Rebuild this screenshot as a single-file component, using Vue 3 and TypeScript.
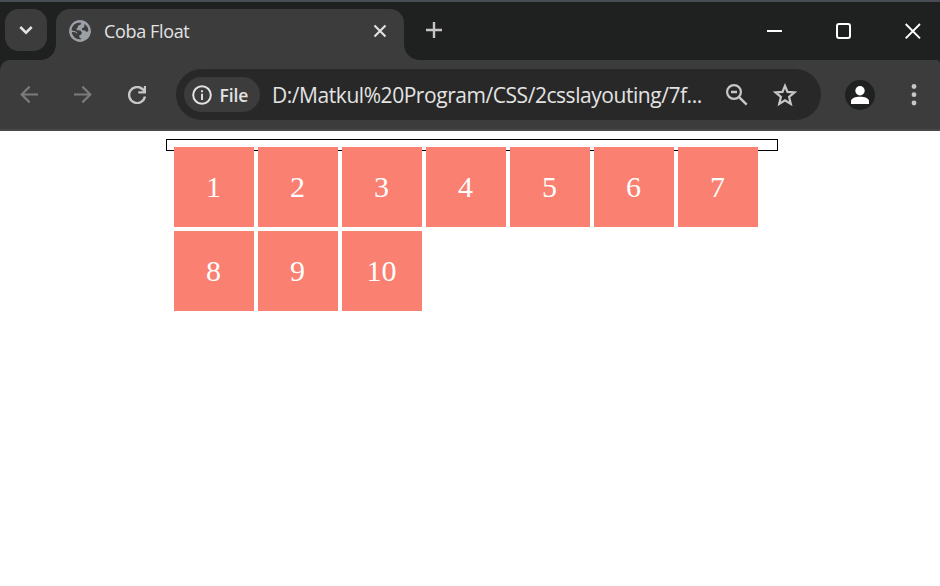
<script setup lang="ts">
const boxes: number[] = Array.from({ length: 10 }, (_, i) => i + 1)
</script>

<template>
  <div class="window">
    <header class="titlebar">
      <button class="tab-search" aria-label="Search tabs">
        <svg width="42" height="42" viewBox="0 0 42 42"><path d="M15.300 18 L21 23.700 L26.700 18" fill="none" stroke="#e3e3e3" stroke-width="2.500" /></svg>
      </button>
      <div class="tab">
        <svg class="globe" width="22" height="22" viewBox="0 0 22 22">
          <circle cx="11" cy="11" r="10.700" fill="#9aa0a6" />
          <path d="M2.500 10.500 C2.500 6 5.500 2.800 9.500 2.500 L12 2.600 L11.800 4.500 L9 5.700 L8.700 8 L7.300 8.500 L8 10.300 L11.300 10.600 L13 12.500 L12 14.800 L10.300 15.200 L10.300 17.200 L12.800 19.300 C7.500 20.300 3.200 16.500 2.600 12 L6.500 12.200 L8.200 14 L8 12 L5.500 10.900 Z" fill="#3c3c3c" />
          <path d="M15.500 4 C18.200 5.400 19.500 8 19.500 11 L17.600 11.900 L16 10.400 L13.300 10.200 L12.800 8.400 L15.200 7.200 Z" fill="#3c3c3c" />
          <circle cx="11" cy="11" r="9.700" fill="none" stroke="#9aa0a6" stroke-width="2" />
        </svg>
        <span class="title">Coba Float</span>
        <svg class="tab-close" width="14" height="14" viewBox="0 0 14 14"><path d="M1.500 1.500 L12.500 12.500 M12.500 1.500 L1.500 12.500" stroke="#e3e3e3" stroke-width="2.100" /></svg>
      </div>
      <svg class="new-tab" width="16" height="16" viewBox="0 0 16 16"><path d="M8 0 V16 M0 8 H16" stroke="#c7c5c8" stroke-width="2.400" /></svg>
      <div class="controls">
        <svg width="16" height="16" viewBox="0 0 16 16"><path d="M0 8 H15" stroke="#fff" stroke-width="2" /></svg>
        <svg width="16" height="16" viewBox="0 0 16 16"><rect x="1" y="1" width="13" height="14" rx="2" fill="none" stroke="#fff" stroke-width="2" /></svg>
        <svg width="16" height="16" viewBox="0 0 16 16"><path d="M0.700 1 L15 15.300 M15 1 L0.700 15.300" stroke="#fff" stroke-width="1.900" /></svg>
      </div>
    </header>
    <nav class="toolbar">
      <div class="nav-icons">
        <svg width="18" height="18" viewBox="0 0 18 18"><path d="M18 8.500 H1.500 M9.600 0.600 L1.700 8.500 L9.600 16.400" fill="none" stroke="#7b7b7b" stroke-width="2.200" /></svg>
        <svg width="18" height="18" viewBox="0 0 18 18"><path d="M0 8.500 H16.500 M8.400 0.600 L16.300 8.500 L8.400 16.400" fill="none" stroke="#7b7b7b" stroke-width="2.200" /></svg>
        <svg width="18" height="18" viewBox="0 0 18 18"><path d="M17 10.500 A8 8 0 1 1 14.700 3.300 L17 5.800 M17 0 V6.400 H10.300" fill="none" stroke="#c7c7c7" stroke-width="2.400" /></svg>
      </div>
      <div class="address">
        <div class="chip">
          <svg width="20" height="20" viewBox="0 0 20 20"><circle cx="10" cy="10" r="8.800" fill="none" stroke="#e3e3e3" stroke-width="2" /><path d="M10 8.700 V15 M10 5.300 V7.200" stroke="#e3e3e3" stroke-width="1.900" /></svg>
          <span>File</span>
        </div>
        <span class="url">D:/Matkul%20Program/CSS/2csslayouting/7f...</span>
        <svg class="zoom" width="22" height="22" viewBox="0 0 22 22"><circle cx="8" cy="8" r="6.900" fill="none" stroke="#c7c7c7" stroke-width="2.200" /><path d="M5 8 H11 M12.800 12.800 L20.700 20.700" fill="none" stroke="#c7c7c7" stroke-width="2.400" /></svg>
        <svg class="star" width="24" height="24" viewBox="0 0 24 24"><path d="M12 2.800 L14.500 8.900 L21.400 9.400 L16.100 13.900 L17.800 20.900 L12 17.200 L6.200 20.900 L7.900 13.900 L2.600 9.400 L9.500 8.900 Z" fill="none" stroke="#c7c7c7" stroke-width="2.200" /></svg>
      </div>
      <div class="profile">
        <svg width="30" height="30" viewBox="0 0 30 30"><circle cx="15" cy="10.700" r="4.700" fill="#fff" /><path d="M6 24 V21.200 C6 18.200 10.500 16.800 15 16.800 S24 18.200 24 21.200 V24 Z" fill="#fff" /></svg>
      </div>
      <svg class="menu" width="6" height="22" viewBox="0 0 6 22"><g fill="#c7c7c7"><circle cx="3" cy="2.500" r="2.400" /><circle cx="3" cy="10.700" r="2.400" /><circle cx="3" cy="19" r="2.400" /></g></svg>
    </nav>
    <main class="page">
      <div class="container">
        <div v-for="n in boxes" :key="n" class="box">{{ n }}</div>
      </div>
    </main>
  </div>
</template>

<style>
body { margin: 0; background: #fff; }
</style>

<style scoped>
* { box-sizing: border-box; }
svg { display: block; flex: none; }
.window { width: 940px; height: 586px; overflow: hidden; background: linear-gradient(#1f2120 0 80px, #fff 80px); font-family: "Open Sans", "Noto Sans", sans-serif; }
.titlebar { height: 60px; background: #1f2120; border-top: 2px solid #484c54; display: flex; padding: 7px 19px 0 5px; }
.tab-search { width: 42px; height: 42px; padding: 0; border: 0; border-radius: 14px; background: #3c3c3c; }
.tab { position: relative; width: 348px; height: 51px; margin-left: 9px; padding: 0 17px 7px 13px; display: flex; align-items: center; background: #3c3c3c; border-radius: 14px 14px 0 0; }
.tab::before, .tab::after { content: ""; position: absolute; bottom: 0; width: 15px; height: 15px; }
.tab::before { left: -15px; background: radial-gradient(circle at 0 0, transparent 14.500px, #3c3c3c 15px); }
.tab::after { right: -15px; background: radial-gradient(circle at 100% 0, transparent 14.500px, #3c3c3c 15px); }
.title { margin-left: 13px; font-size: 18px; line-height: 24px; letter-spacing: -0.35px; color: #e3e3e3; white-space: nowrap; }
.tab-close { margin-left: auto; }
.new-tab { margin: 13px 0 0 22px; }
.controls { display: flex; gap: 53px; margin: 14px 0 0 auto; }
.toolbar { height: 71px; padding: 0 23px 0 20px; display: flex; align-items: flex-start; background: #3c3c3c; border-bottom: 2px solid #484848; border-radius: 10px 4px 0 0; }
.nav-icons { display: flex; gap: 36px; padding-top: 26px; }
.address { width: 645px; height: 51px; margin: 9px 0 0 30px; padding-left: 8px; display: flex; align-items: center; border-radius: 26px; background: #282828; }
.chip { width: 76px; height: 35px; border-radius: 18px; background: #3c3c3c; display: flex; align-items: center; gap: 8px; padding-left: 7.500px; font-size: 17.500px; font-weight: 600; letter-spacing: -0.1px; color: #e3e3e3; }
.url { width: 442px; margin-left: 12px; font-size: 21px; line-height: 28px; letter-spacing: -0.45px; color: #e3e3e3; white-space: nowrap; }
.zoom { margin-left: 12px; }
.star { margin-left: 25px; }
.profile { margin: 20px 0 0 24px; width: 30px; height: 30px; border-radius: 50%; background: #1f2120; }
.menu { margin: 24px 0 0 auto; }
.page { height: 455px; padding-top: 8px; background: #fff; }
.container { width: 612px; height: 12px; margin-left: 166px; padding: 7px 7px 3px; border: 1px solid #000; display: flex; flex-wrap: wrap; gap: 4px; }
.box { width: 80px; height: 80px; padding-right: 1px; background: salmon; color: #fff; font: 30px/80px "Liberation Serif", serif; text-align: center; }
</style>
